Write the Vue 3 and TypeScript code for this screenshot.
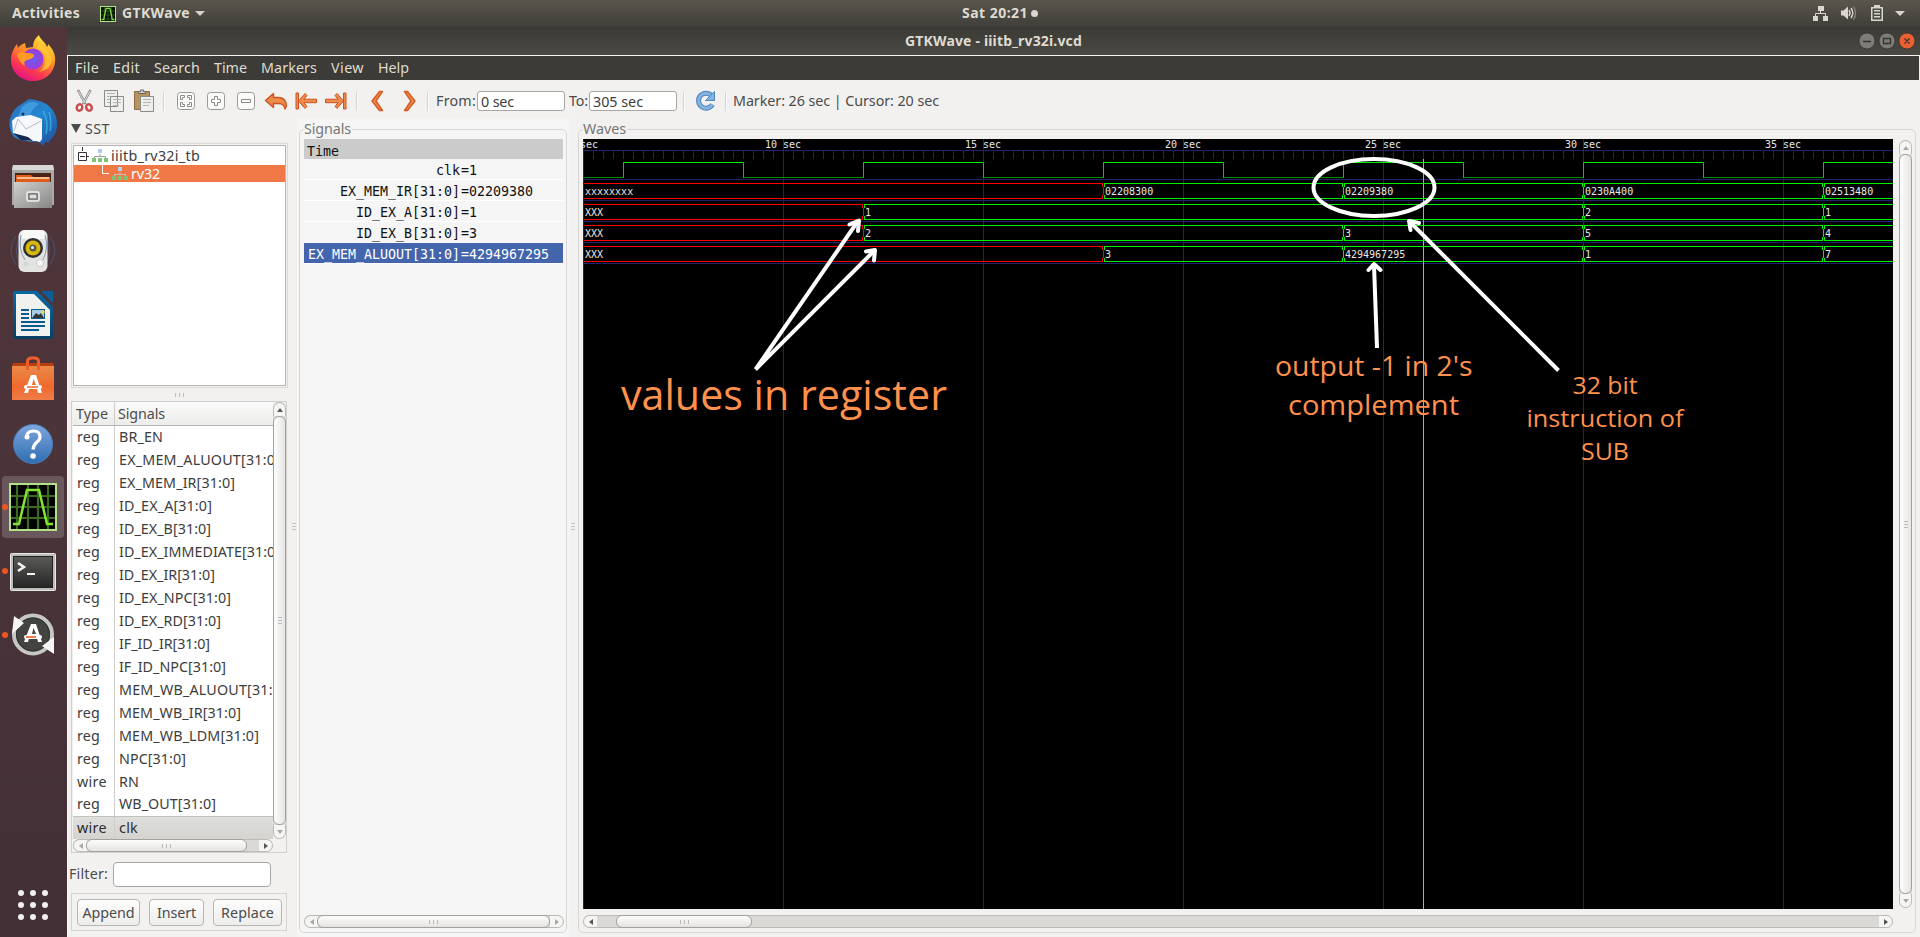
<script setup lang="ts">
type Fitted = { text: string; width: number }
type Bus = { top: number; known: number; segments: { at: number; value: string }[] }

/* Spreads a label's letters so that it takes the given number of pixels. */
const vFit = {
  mounted(el: HTMLElement, binding: { value: number }) {
    const count = (el.textContent ?? '').trim().length
    const gap = (binding.value - el.getBoundingClientRect().width) / count
    el.style.letterSpacing = `${gap.toFixed(3)}px`
  },
}

const menus: Fitted[] = [
  { text: 'File', width: 24 }, { text: 'Edit', width: 27 }, { text: 'Search', width: 46 },
  { text: 'Time', width: 33 }, { text: 'Markers', width: 56 }, { text: 'View', width: 33 },
  { text: 'Help', width: 31 },
]

const rows: { type: string; name: string; width: number }[] = [
  { type: 'reg', name: 'BR_EN', width: 44 },
  { type: 'reg', name: 'EX_MEM_ALUOUT[31:0]', width: 161 },
  { type: 'reg', name: 'EX_MEM_IR[31:0]', width: 116 },
  { type: 'reg', name: 'ID_EX_A[31:0]', width: 93 },
  { type: 'reg', name: 'ID_EX_B[31:0]', width: 92 },
  { type: 'reg', name: 'ID_EX_IMMEDIATE[31:0]', width: 161 },
  { type: 'reg', name: 'ID_EX_IR[31:0]', width: 96 },
  { type: 'reg', name: 'ID_EX_NPC[31:0]', width: 112 },
  { type: 'reg', name: 'ID_EX_RD[31:0]', width: 102 },
  { type: 'reg', name: 'IF_ID_IR[31:0]', width: 91 },
  { type: 'reg', name: 'IF_ID_NPC[31:0]', width: 107 },
  { type: 'reg', name: 'MEM_WB_ALUOUT[31:0]', width: 167 },
  { type: 'reg', name: 'MEM_WB_IR[31:0]', width: 122 },
  { type: 'reg', name: 'MEM_WB_LDM[31:0]', width: 140 },
  { type: 'reg', name: 'NPC[31:0]', width: 67 },
  { type: 'wire', name: 'RN', width: 20 },
  { type: 'reg', name: 'WB_OUT[31:0]', width: 97 },
  { type: 'wire', name: 'clk', width: 19 },
]

const signals = [
  { name: 'clk', value: '=1' },
  { name: 'EX_MEM_IR[31:0]', value: '=02209380' },
  { name: 'ID_EX_A[31:0]', value: '=1' },
  { name: 'ID_EX_B[31:0]', value: '=3' },
  { name: 'EX_MEM_ALUOUT[31:0]', value: '=4294967295' },
]

/* The wave canvas is 1310 wide: 40 px a second, from 5 sec on. */
const WIDTH = 1310
const px = (sec: number) => (sec - 5) * 40
const marks = [5, 10, 15, 20, 25, 30, 35]
const ticks = Array.from({ length: 131 }, (_, i) => i * 10)
const clockEdges = [6, 9, 12, 15, 18, 21, 24, 27, 30, 33, 36]
const clockSpans = [5, ...clockEdges].map((t, i, all) => ({
  from: px(t),
  to: i + 1 < all.length ? px(all[i + 1]) : WIDTH,
  high: i % 2 === 1,
}))
const separators = [40, 61, 82, 103, 124]
const buses: Bus[] = [
  { top: 44, known: 18, segments: [{ at: 5, value: 'xxxxxxxx' }, { at: 18, value: '02208300' }, { at: 24, value: '02209380' }, { at: 30, value: '0230A400' }, { at: 36, value: '02513480' }] },
  { top: 65, known: 12, segments: [{ at: 5, value: 'XXX' }, { at: 12, value: '1' }, { at: 30, value: '2' }, { at: 36, value: '1' }] },
  { top: 86, known: 12, segments: [{ at: 5, value: 'XXX' }, { at: 12, value: '2' }, { at: 24, value: '3' }, { at: 30, value: '5' }, { at: 36, value: '4' }] },
  { top: 107, known: 18, segments: [{ at: 5, value: 'XXX' }, { at: 18, value: '3' }, { at: 24, value: '4294967295' }, { at: 30, value: '1' }, { at: 36, value: '7' }] },
]
function busPath(bus: Bus, i: number): string {
  const a = px(bus.segments[i].at)
  const next = bus.segments[i + 1]
  const b = next ? px(next.at) : WIDTH
  const t = bus.top
  let d = `M${a + 1} ${t + 0.5}H${b}M${a + 1} ${t + 15.5}H${b}`
  if (i > 0) d += `M${a + 1.5} ${t}v4M${a + 1.5} ${t + 12}v4`
  if (next) d += `M${b - 0.5} ${t}v4M${b + 0.5} ${t + 4}v8M${b - 0.5} ${t + 12}v4`
  return d
}
</script>

<template>
  <div class="screen">
    <header class="topbar">
      <span class="activities"><b v-fit="68">Activities</b></span>
      <svg class="app-icon" viewBox="0 0 48 48"><rect width="48" height="48" fill="#b4e08a" /><rect x="3" y="3" width="42" height="42" fill="#061006" /><path d="M3 15H45M3 27H45M3 39H45M13 3V45M24 3V45M35 3V45" stroke="#3c6a20" stroke-width="2" /><path d="M5 41h6L18 7h12l7 34h6" fill="none" stroke="#7ddb3a" stroke-width="4" /></svg>
      <span class="app-name"><b v-fit="68">GTKWave</b></span>
      <svg class="caret" width="10" height="5"><path d="M0 0h10L5 5z" fill="#d4d2cb" /></svg>
      <span class="clock"><b v-fit="66">Sat 20:21</b><i></i></span>
      <svg class="tray" width="96" height="20" viewBox="1811 4 96 20">
        <g fill="#d8d6cf"><path d="M1818 6h6v5h-6zM1813 16h5v5h-5zM1823 16h5v5h-5z" /><path d="M1820.500 11v3M1815.500 16v-2.500h10V16" fill="none" stroke="#d8d6cf" />
          <path d="M1841 10.500h2.500l4.500-4v13l-4.500-4h-2.500z" /><path d="M1849 10q2 3 0 6M1851 8q3.500 5 0 10" fill="none" stroke="#d8d6cf" stroke-width="1.400" /><path d="M1853.500 6.500q4 6.500 0 13" fill="none" stroke="#85837c" stroke-width="1.400" />
          <path d="M1874 5h6v2h3v14h-12V7h3z" /><path d="M1872.500 8.500h9v11h-9z" fill="#4b4943" /><path d="M1874 10h6v1.500h-6zM1874 13h6v1.500h-6zM1874 16h6v1.500h-6z" /><path d="M1895 11h10l-5 5z" />
        </g>
      </svg>
    </header>

    <div class="desktop">
      <nav class="dock">
        <div class="launcher"><svg viewBox="0 0 48 48">
          <defs><linearGradient id="fox" x1=".8" y1="0" x2=".3" y2="1"><stop offset="0" stop-color="#fff04a" /><stop offset=".4" stop-color="#ff9a22" /><stop offset=".75" stop-color="#fb3750" /><stop offset="1" stop-color="#e0128a" /></linearGradient><radialGradient id="globe"><stop offset="0" stop-color="#6a5cf0" /><stop offset="1" stop-color="#a03cd8" /></radialGradient></defs>
          <path d="M30 0c1 4 5 6 7 10l1 2c1-1 1-2 1-3 5 5 8 11 7 18-1 12-11 19-22 19S2 38 2 25c0-7 3-12 6-16l1 4c2-3 5-4 7-5l1 5 7-1c0-5 2-9 6-12z" fill="url(#fox)" />
          <circle cx="24" cy="24" r="10.500" fill="url(#globe)" /><path d="M8 19q4-3 9-1c4 0 8 0 8 3-1 3-5 3-7 4-3 1-3 3-2 6-5-3-7-8-8-12z" fill="#ff9a25" /><path d="M27 14q9 1 9 11 0 8-6 12 12-2 13-13Q39 12 30 9z" fill="#ffc936" opacity=".75" />
        </svg></div>
        <div class="launcher"><svg viewBox="0 0 48 48">
          <defs><linearGradient id="bird" x2="1" y2="1"><stop offset="0" stop-color="#2b6fc0" /><stop offset=".5" stop-color="#2387cf" /><stop offset="1" stop-color="#214a9a" /></linearGradient></defs>
          <path d="M20 0Q34 1 41 8q8 8 7 20-1 9-8 14l1 2-5-1-2 4-4-4Q12 43 5 38-1 30 1 20 4 9 14 4z" fill="url(#bird)" /><path d="M13 8Q21 0 30 5q-8 5-10 14l-11-1z" fill="#3f9bdd" /><path d="M3 22 7 18l15-2 11 4v20l-2 3-4-1-8 0L4 34z" fill="#f6f7fa" /><path d="m9 20 8 10 15-8M9 20l-4 12" fill="none" stroke="#b6bcc9" /><path d="m4 34 15 4 5 4-12-1z" fill="#172850" /><circle cx="14" cy="15" r="1.500" fill="#123058" />
          <path d="M34 12q6 10 3 23M40 13q3 9 1 19" stroke="#36a6dd" stroke-width="1.500" fill="none" />
        </svg></div>
        <div class="launcher"><svg viewBox="0 0 48 48">
          <defs><linearGradient id="metal" x2="1" y2="1"><stop offset="0" stop-color="#cfcfcd" /><stop offset="1" stop-color="#878785" /></linearGradient></defs>
          <path d="M4 2h40l1 4v36H3V6z" fill="#a9a9a7" /><path d="M4 2h40l1 5H3z" fill="#d8d8d6" /><path d="M6 10h36v10H6z" fill="#4a2416" /><path d="M7 12h15l2 2h17v5H7z" fill="#e05c1c" /><path d="M8 15h32" stroke="#ffe0b0" stroke-width="1.500" /><path d="M5 19h38v26H5z" fill="url(#metal)" /><rect x="18" y="29" width="12" height="9" rx="1.500" fill="#aaa" stroke="#efefef" stroke-width="1.500" /><rect x="20" y="31" width="8" height="5" fill="#ddd" stroke="#555" />
        </svg></div>
        <div class="launcher"><svg viewBox="0 0 48 48">
          <path d="M7 9q-10 13 0 29M11 10Q4 23 11 37M41 9q10 13 0 29M37 10q7 13 0 27" fill="none" stroke="#4a5f86" opacity=".7" />
          <rect x="9.500" y="3" width="29" height="42" rx="6" fill="#e3e3e1" /><rect x="12" y="3" width="24" height="9" rx="4" fill="#f8f8f7" /><path d="M12 8Q9 22 16 33M36 8q4 12-2 25" stroke="#8a9cba" fill="none" /><circle cx="24" cy="21" r="10" fill="#2f3133" /><circle cx="24" cy="21" r="7.500" fill="#d8b80a" /><circle cx="24" cy="21" r="3.500" fill="#5a5c4c" /><circle cx="23.500" cy="20.500" r="1.500" fill="#eee" /><circle cx="31" cy="36" r="3.500" fill="#fafafa" stroke="#c8c8c4" /><circle cx="17" cy="37" r="2.500" fill="#d6d6d3" />
        </svg></div>
        <div class="launcher"><svg viewBox="0 0 48 48">
          <defs><linearGradient id="writer" x2="0" y2="1"><stop offset="0" stop-color="#0a69a3" /><stop offset="1" stop-color="#083f63" /></linearGradient></defs>
          <path d="M6 0h22l16 16v30q0 2-2 2H6q-2 0-2-2V2q0-2 2-2z" fill="url(#writer)" /><path d="M32 0h12v12z" fill="#0a5f96" /><path d="M7 3h18l16 16v26H7z" fill="#f1f1f0" /><path d="M12 19h8M12 23h8M12 27h8M12 31h24M12 35h24M12 39h18" stroke="#0b5c8e" stroke-width="2" /><path d="M22 18h14v10H22z" fill="#0b5c8e" /><path d="M23 19h12v8H23z" fill="#a8cfea" /><path d="m23 27 4-5 3 2 2-2 3 5z" fill="#33383a" /><circle cx="34" cy="21" r="1.800" fill="#e8d84a" />
        </svg></div>
        <div class="launcher"><svg viewBox="0 0 48 48">
          <defs><linearGradient id="bag" x2="0" y2="1"><stop offset="0" stop-color="#e98a4a" /><stop offset=".6" stop-color="#ef6a2c" /><stop offset="1" stop-color="#f07d48" /></linearGradient></defs>
          <path d="M4 8h40l1 4H3z" fill="#b93d0d" /><path d="M3 11h42v34H3z" fill="url(#bag)" /><path d="M18.500 15V7q0-4 4-4h3q4 0 4 4v8" fill="none" stroke="#f05e2b" stroke-width="3" /><path d="M22 20h5l6 18h-4l-1-4h-8l-1 4h-4zM24.500 24 23 30h4z" fill="#fff" fill-rule="evenodd" /><rect x="15" y="30" width="18" height="4" rx="2" fill="#fff" /><path d="M18 32h11" stroke="#ee6a2e" stroke-width="1.500" />
        </svg></div>
        <div class="launcher low"><svg viewBox="0 0 48 48">
          <defs><linearGradient id="help" x2="0" y2="1"><stop offset="0" stop-color="#7fa6de" /><stop offset="1" stop-color="#2e6eb0" /></linearGradient></defs>
          <circle cx="24" cy="24" r="19.500" fill="url(#help)" stroke="#4b7dbb" /><path d="M17.500 18q0-7 7-7 6.500 0 6.500 6 0 3-3.500 5.500-3 2.500-3.500 7" fill="none" stroke="#fff" stroke-width="3.200" /><circle cx="18" cy="17" r="2.500" fill="#fff" /><circle cx="24" cy="36" r="2.800" fill="#fff" />
        </svg></div>
        <div class="launcher active running"><svg viewBox="0 0 48 48">
          <rect width="48" height="48" fill="#b4e08a" /><rect x="2" y="2" width="44" height="44" fill="#000" /><path d="M2 13H46M2 24H46M2 35H46M8 2V46M19 2V46M29 2V46M39 2V46" stroke="#3c6a20" stroke-width="2.200" /><path d="M4 41h6L18 7h12l8 34h6" fill="none" stroke="#82e332" stroke-width="2.500" />
        </svg></div>
        <div class="launcher running low"><svg viewBox="0 0 48 48">
          <defs><linearGradient id="term" x2="0" y2="1"><stop offset="0" stop-color="#5a5a58" /><stop offset="1" stop-color="#262626" /></linearGradient></defs>
          <rect x="1.500" y="5.500" width="45" height="37" rx="1" fill="#bdbdbb" stroke="#e8e8e6" /><rect x="4.500" y="8.500" width="39" height="31" fill="url(#term)" stroke="#222" /><path d="m9 15 6 4-6 4" fill="none" stroke="#f4f4f4" stroke-width="2.500" /><path d="M18 26h8" stroke="#f4f4f4" stroke-width="2" />
        </svg></div>
        <div class="launcher running"><svg viewBox="0 0 48 48">
          <circle cx="24" cy="23.500" r="19" fill="#434340" stroke="#c6c6c4" stroke-width="4" /><circle cx="24" cy="23.500" r="16.500" fill="none" stroke="#2e2e2c" /><path d="M5 5 15 12 3 23zM45 43 33 35l12-9z" fill="#f5f5f5" /><path d="M22 13h5l6 18h-4l-1-4h-8l-1 4h-4zM24.500 17 23 23h4z" fill="#fff" fill-rule="evenodd" /><rect x="15" y="24" width="18" height="4" rx="2" fill="#fff" /><path d="M17 26h10" stroke="#ee5a20" stroke-width="1.600" />
        </svg></div>
        <div class="apps-grid"><i v-for="n in 9" :key="n"></i></div>
      </nav>

      <main class="window">
        <div class="titlebar">
          <b v-fit="177">GTKWave - iiitb_rv32i.vcd</b>
          <svg class="controls" width="60" height="20" viewBox="0 0 60 20">
            <circle cx="10" cy="10" r="8" fill="#7d7c77" stroke="#33322e" stroke-width=".8" /><circle cx="30" cy="10" r="8" fill="#7d7c77" stroke="#33322e" stroke-width=".8" /><circle cx="50" cy="10" r="8" fill="#ec5f33" stroke="#33322e" stroke-width=".8" /><path d="M6 10.500h8M26.500 7.500h7v5h-7zM47.500 7.500l5 5M52.500 7.500l-5 5" fill="none" stroke="#35342f" stroke-width="1.300" />
          </svg>
        </div>
        <div class="menubar"><span v-for="m in menus" :key="m.text" v-fit="m.width">{{ m.text }}</span></div>

        <div class="toolbar">
          <div class="tool"><svg viewBox="0 0 24 24"><path d="m6 1 7.500 14M18.500 1 11 15" stroke="#8d8f8c" stroke-width="2.600" /><path d="m6.500 2 6.500 12M18 2l-6.500 12" stroke="#dedfdc" stroke-width="1" /><ellipse cx="7.500" cy="18.500" rx="2.700" ry="3.300" fill="none" stroke="#c9484a" stroke-width="2.400" transform="rotate(25 7.500 18.500)" /><ellipse cx="17" cy="18.500" rx="2.700" ry="3.300" fill="none" stroke="#c9484a" stroke-width="2.400" transform="rotate(-25 17 18.500)" /></svg></div>
          <div class="tool"><svg viewBox="0 0 24 24"><path d="M2.500 1.500h13v16h-13zM8.500 7.500h13v15h-13z" fill="#eeeeec" stroke="#8a8c87" /><path d="M5 4.500h8M5 7.500h3M5 10.500h3M5 13.500h3M11 10.500h8M11 13.500h8M11 16.500h6" stroke="#b4b6b1" /></svg></div>
          <div class="tool"><svg viewBox="0 0 24 24"><path d="M2.500 2.500h15v18h-15z" fill="#b7935e" stroke="#8c6c42" /><path d="M6.500 4.500v-2h2v-1.500h3v1.500h2v2z" fill="#ccc" stroke="#666" /><path d="M8.500 7.500h13v15h-13z" fill="#eeeeec" stroke="#8a8c87" /><path d="M11 10.500h8M11 13.500h8M11 16.500h6" stroke="#b4b6b1" /></svg></div>
          <div class="divider first"></div>
          <div class="tool"><svg viewBox="0 0 24 24"><rect x="3.500" y="3.500" width="17" height="17" rx="3" fill="#fbfbfa" stroke="#979994" /><path d="M6.500 10.500v-4h4v2h-2v2zM17.500 10.500v-4h-4v2h2v2zM6.500 13.500v4h4v-2h-2v-2zM17.500 13.500v4h-4v-2h2v-2z" fill="#fff" stroke="#888a85" /></svg></div>
          <div class="tool"><svg viewBox="0 0 24 24"><rect x="3.500" y="3.500" width="17" height="17" rx="3" fill="#fbfbfa" stroke="#979994" /><path d="M10.500 7.500h3v3h3v3h-3v3h-3v-3h-3v-3h3z" fill="#fff" stroke="#888a85" /></svg></div>
          <div class="tool"><svg viewBox="0 0 24 24"><rect x="3.500" y="3.500" width="17" height="17" rx="3" fill="#fbfbfa" stroke="#979994" /><path d="M7.500 10.500h9v3h-9z" fill="#fff" stroke="#888a85" /></svg></div>
          <div class="tool"><svg viewBox="0 0 24 24"><path d="M1.500 11.500 9.500 4.500v4H14q8 0 8.500 8.500l-1.500 3q-1-6-7-5.500H9.500v4z" fill="#ec8b4c" stroke="#cf5320" stroke-width="1.400" stroke-linejoin="round" /></svg></div>
          <div class="tool"><svg viewBox="0 0 24 24"><path d="M2 4h2.500v16H2zM4.500 12l6.500-7.500 2 2-3 3.700h12.500v3.500H10l3 3.700-2 2z" fill="#ec8b4c" stroke="#cf5320" stroke-linejoin="round" /></svg></div>
          <div class="tool"><svg viewBox="0 0 24 24"><path d="M22 4h-2.500v16H22zM19.500 12 13 4.500l-2 2 3 3.700H1.500v3.500H14l-3 3.700 2 2z" fill="#ec8b4c" stroke="#cf5320" stroke-linejoin="round" /></svg></div>
          <div class="divider second"></div>
          <div class="tool wide"><svg viewBox="0 0 24 24"><path d="M13.500 2.500h3L10 12l6.500 9.500h-3L6 12z" fill="#ec8b4c" stroke="#d65a22" stroke-width="1.400" stroke-linejoin="round" /></svg></div>
          <div class="tool wide"><svg viewBox="0 0 24 24"><path d="M10.500 2.500h-3L14 12l-6.500 9.500h3L18 12z" fill="#ec8b4c" stroke="#d65a22" stroke-width="1.400" stroke-linejoin="round" /></svg></div>
          <div class="divider third"></div>
          <div class="caption from"><span v-fit="40">From:</span></div>
          <div class="entry"><span v-fit="33">0 sec</span></div>
          <div class="caption to"><span v-fit="19">To:</span></div>
          <div class="entry"><span v-fit="50">305 sec</span></div>
          <div class="divider fourth"></div>
          <div class="tool"><svg viewBox="0 0 24 24"><path d="M18.500 6.500A7.500 7.500 0 1 0 19.500 15.500" fill="none" stroke="#4f87c0" stroke-width="5" /><path d="M18.500 6.500A7.500 7.500 0 1 0 19.500 15.500" fill="none" stroke="#85b1dd" stroke-width="3" /><path d="M21.500 2.500v9H12.500z" fill="#85b1dd" stroke="#4f87c0" /></svg></div>
          <div class="divider fifth"></div>
          <div class="caption"><span v-fit="206">Marker: 26 sec | Cursor: 20 sec</span></div>
        </div>

        <div class="panes">
          <section class="sst">
            <div class="sst-head"><svg width="10" height="9"><path d="M0 0h10L5 9z" fill="#4c4c4c" /></svg><span v-fit="25">SST</span></div>
            <div class="tree">
              <div class="tree-inner">
                <div class="node root">
                  <svg class="expander" width="12" height="15"><path d="M5.500 0v4M10 9.500h2M1.500 5.500h8v8h-8zM3 9.500h5" fill="none" stroke="#333" /></svg>
                  <svg class="module" width="16" height="14"><path d="M8 5v2M2.500 9V7.500h11V9" fill="none" stroke="#9aa09a" /><path d="M6 0h4v4H6z" fill="#a8ccf0" /><path d="M0 9h4v4H0zM6 9h4v4H6zM12 9h4v4h-4z" fill="#7fc474" /></svg>
                  <span v-fit="89">iiitb_rv32i_tb</span>
                </div>
                <div class="node selected">
                  <svg class="branch" width="7" height="9"><path d="M.5 0v8.500H7" fill="none" stroke="#fff" /></svg>
                  <svg class="module" width="16" height="14"><path d="M8 5v2M2.500 9V7.500h11V9" fill="none" stroke="#c8c0b8" /><path d="M6 0h4v4H6z" fill="#b4d4f4" /><path d="M0 9h4v4H0zM6 9h4v4H6zM12 9h4v4h-4z" fill="#7fc474" /></svg>
                  <span v-fit="29">rv32</span>
                </div>
              </div>
            </div>
            <div class="grip-h"><i></i><i></i><i></i></div>
            <div class="list">
              <div class="list-top">
                <div class="table">
                  <div class="thead"><div class="cell type"><span v-fit="32">Type</span></div><div class="cell name"><span v-fit="47">Signals</span></div></div>
                  <div v-for="(r, i) in rows" :key="r.name" class="trow" :class="{ current: i === rows.length - 1 }">
                    <div class="cell type"><span v-fit="r.type === 'reg' ? 23 : 30">{{ r.type }}</span></div>
                    <div class="cell name"><span v-fit="r.width">{{ r.name }}</span></div>
                  </div>
                </div>
                <div class="vbar"><div class="knob top"><i class="arrow up"></i></div><div class="vthumb"><i></i><i></i><i></i></div><div class="knob bottom"><i class="arrow down pale"></i></div></div>
              </div>
              <div class="hbar list-hbar"><div class="knob left"><i class="arrow west pale"></i></div><div class="trough"><div class="hthumb list-thumb"><i></i><i></i><i></i></div></div><div class="knob right"><i class="arrow east"></i></div></div>
            </div>
            <div class="filter"><span v-fit="39">Filter:</span><div class="filter-entry"></div></div>
            <div class="buttons">
              <button class="append"><span v-fit="52">Append</span></button>
              <button class="insert"><span v-fit="39">Insert</span></button>
              <button class="replace"><span v-fit="53">Replace</span></button>
            </div>
            <div class="grip-v"><i></i><i></i><i></i></div>
          </section>

          <section class="signals">
            <div class="frame">
              <span class="legend"><span v-fit="47">Signals</span></span>
              <div class="time-row">Time</div>
              <div v-for="(s, i) in signals" :key="s.name" class="signal" :class="{ chosen: i === 4 }"><span class="signal-name">{{ s.name }}</span><span>{{ s.value }}</span></div>
              <div class="hbar bottom-bar"><div class="knob left"><i class="arrow west pale"></i></div><div class="trough"><div class="hthumb full"><i></i><i></i><i></i></div></div><div class="knob right"><i class="arrow east pale"></i></div></div>
            </div>
          </section>

          <section class="waves">
            <div class="grip-v side"><i></i><i></i><i></i></div>
            <div class="frame">
              <span class="legend"><span v-fit="43">Waves</span></span>
              <div class="wave-row">
                <svg class="canvas" width="1310" height="770" viewBox="0 0 1310 770">
                  <rect width="1310" height="770" fill="#000" />
                  <g class="crisp" stroke="#20206c">
                    <path d="M0 11.500H1310" />
                    <path v-for="t in ticks" :key="t" :d="`M${t + 0.5} 12v8`" />
                    <path v-for="m in marks" :key="m" :d="`M${px(m) + 0.5} 0V770`" />
                    <path v-for="y in separators" :key="y" :d="`M0 ${y + 0.5}H1310`" />
                  </g>
                  <g class="mono">
                    <text v-for="m in marks" :key="m" :x="px(m) - (m > 9 ? 18 : 15)" y="9">{{ m }} sec</text>
                  </g>
                  <g class="crisp" fill="none">
                    <path v-for="s in clockSpans" :key="s.from" :d="`M${s.from} ${s.high ? 23.5 : 38.5}H${s.to + 1}`" :stroke="s.high ? '#00f200' : '#008c00'" />
                    <path v-for="t in clockEdges" :key="t" :d="`M${px(t) + 0.5} 23v16`" stroke="#00cc00" />
                    <g v-for="b in buses" :key="b.top">
                      <path v-for="(s, i) in b.segments" :key="i" :d="busPath(b, i)" :stroke="s.at < b.known ? '#ff0000' : '#00f000'" />
                    </g>
                  </g>
                  <g v-for="b in buses" :key="b.top" class="mono">
                    <text v-for="(s, i) in b.segments" :key="i" :x="px(s.at) + 2" :y="b.top + 12">{{ s.value }}</text>
                  </g>
                  <path class="crisp" d="M840.500 20V770" stroke="#ff8686" />
                  <g class="note">
                    <text x="38" y="270.500" font-size="41.500" textLength="326" lengthAdjust="spacingAndGlyphs">values in register</text>
                    <text x="692" y="237" font-size="28" textLength="197.500" lengthAdjust="spacingAndGlyphs">output -1 in 2's</text>
                    <text x="705" y="276" font-size="28" textLength="171" lengthAdjust="spacingAndGlyphs">complement</text>
                    <text x="989.500" y="254.500" font-size="24" textLength="65" lengthAdjust="spacingAndGlyphs">32 bit</text>
                    <text x="943.500" y="288" font-size="24" textLength="157" lengthAdjust="spacingAndGlyphs">instruction of</text>
                    <text x="998" y="321" font-size="24" textLength="48" lengthAdjust="spacingAndGlyphs">SUB</text>
                  </g>
                  <g fill="none" stroke="#fff" stroke-width="4">
                    <ellipse cx="791" cy="48.500" rx="60.500" ry="28.500" />
                    <path d="M172.500 230.500 275 82M172.500 230.500 291 112M794 209 791 126M975.500 231.500 827 83" />
                    <path d="m266.500 85.500 9.500-4-1 10.500M283 112.500l9-1.500-1 10.500M785.500 131l5.500-6 6.500 6M827.500 91l-1.500-9 10 2" stroke-linecap="round" stroke-linejoin="round" />
                  </g>
                </svg>
                <div class="vbar waves-vbar"><div class="knob top"><i class="arrow up pale"></i></div><div class="vthumb"><i></i><i></i><i></i></div><div class="knob bottom"><i class="arrow down pale"></i></div></div>
              </div>
              <div class="hbar bottom-bar"><div class="knob left"><i class="arrow west"></i></div><div class="trough"><div class="hthumb wave-thumb"><i></i><i></i><i></i></div></div><div class="knob right"><i class="arrow east"></i></div></div>
            </div>
          </section>
        </div>
      </main>
    </div>
  </div>
</template>

<style>
body { margin: 0; overflow: hidden; }
</style>

<style scoped>
* { box-sizing: border-box; }
.screen { width: 1920px; height: 937px; display: flex; flex-direction: column; overflow: hidden; font: 14.3px/17px "Noto Sans", "Open Sans", sans-serif; color: #4c4c4c; white-space: nowrap; }
svg { display: block; flex: none; }
.screen span, .screen b { display: inline-block; flex: none; }
.topbar { position: relative; height: 27px; flex: none; display: flex; align-items: center; padding-left: 12px; background: linear-gradient(#5a564d, #3f3e39); color: #dfdbd2; font-size: 14px; }
.topbar > span { padding-bottom: 2px; }
.activities { width: 88px; }
.app-icon { width: 16px; height: 16px; }
.app-name { width: 68px; margin: 0 5px 0 6px; }
.clock { position: absolute; left: 962px; top: 4px; }
.clock i { position: absolute; left: 69px; top: 6px; width: 7px; height: 7px; border-radius: 50%; background: #d8d6cf; }
.tray { position: absolute; left: 1811px; top: 4px; }
.desktop { flex: 1; display: flex; }
.dock { width: 67px; height: 910px; display: flex; flex-direction: column; background: linear-gradient(#513539, #4a343a 50%, #423036); }
.launcher { position: relative; height: 64px; flex: none; display: flex; align-items: center; justify-content: center; padding-right: 1px; }
.launcher.low { padding-top: 2px; }
.launcher svg { position: relative; width: 48px; height: 48px; }
.launcher.active::before { content: ""; position: absolute; left: 2px; top: 1px; width: 62px; height: 62px; border-radius: 4px; background: #6a575c; }
.launcher.running::after { content: ""; position: absolute; left: 2px; top: 29px; width: 6px; height: 6px; border-radius: 50%; background: #ef5522; }
.apps-grid { margin: auto 0 17px 18px; display: grid; grid-template-columns: repeat(3, 6px); gap: 6px; }
.apps-grid i { width: 6px; height: 6px; border-radius: 50%; background: #f2f0f0; }
.window { width: 1853px; display: flex; flex-direction: column; background: #f2f1f0; }
.titlebar { position: relative; height: 28px; padding-bottom: 2px; display: flex; align-items: center; justify-content: center; background: linear-gradient(#3a3934, #4b4a44); color: #dfdbd2; font-size: 14px; }
.controls { position: absolute; right: 3px; top: 4px; }
.menubar { height: 25px; margin: 0 1px; padding: 0 0 2px 7px; display: flex; align-items: center; gap: 14px; background: #3c3b37; border-top: 1px solid #f6f5f2; color: #dfdbd2; }
.toolbar { height: 38px; padding: 4px 0 0 2px; display: flex; align-items: center; }
.tool { width: 30px; display: flex; justify-content: center; }
.tool.wide { width: 31.500px; }
.tool svg { width: 24px; height: 24px; }
.caption { padding-bottom: 2px; }
.divider { height: 19px; border-left: 1px solid #d6d4d1; border-right: 1px solid #fafafa; width: 2px; }
.first { margin: 0 6px 0 4px; }
.second { margin: 0 4px 0 5px; }
.third { margin: 0 7px 0 2px; }
.fourth { margin: 0 5px 0 6px; }
.fifth { margin: 0 6px 0 5px; }
.from { width: 41px; }
.to { width: 20px; margin-left: 4px; }
.entry { width: 88px; height: 20px; padding: 0 0 0 3px; border: 1px solid #a9a7a3; border-radius: 3px; background: #fff; display: flex; align-items: center; color: #3c3c3c; }
.panes { height: 819px; display: flex; }
.sst { position: relative; width: 230px; display: flex; flex-direction: column; border-left: 1px solid #faf9f8; padding-left: 3px; }
.sst-head { height: 25px; padding-bottom: 5px; display: flex; align-items: center; gap: 4px; }
.tree { width: 217px; height: 245px; border: 1px solid #dcdad8; padding: 1px; }
.tree-inner { height: 241px; border: 1px solid #b6b4b1; background: #fff; }
.node { height: 18px; display: flex; align-items: center; color: #3c3c3c; }
.root { height: 19px; padding: 0 0 0 3px; }
.expander { margin: -2px 3px 0 0; }
.root span { margin: -1px 0 0 3px; }
.selected { height: 17px; padding-left: 28px; background: #f07746; color: #fff; }
.branch { margin: -8px 3px 0 0; }
.selected span { margin: -1px 0 0 3px; }
.grip-h { height: 13px; display: flex; align-items: center; justify-content: center; gap: 3px; padding-right: 10px; }
.grip-h i { width: 1px; height: 4px; background: #bfbdba; }
.grip-v { position: absolute; left: 224px; top: 405px; display: flex; flex-direction: column; gap: 2px; }
.grip-v i { width: 4px; height: 1px; background: #c4c2bf; }
.grip-v.side { left: 1px; }
.list { width: 216px; height: 452px; border: 1px solid #d2d0ce; display: flex; flex-direction: column; }
.list-top { display: flex; height: 437px; padding-left: 1px; }
.table { width: 201px; overflow: hidden; background: #fff; }
.thead { height: 24px; display: flex; background: linear-gradient(#fafafa, #ececea); border-bottom: 1px solid #b5b3b0; }
.trow { height: 22.970px; display: flex; color: #3c3c3c; }
.trow .cell { padding-bottom: 2px; }
.current { background: linear-gradient(#dededc, #d4d3d0); border-top: 1px solid #c4c2bf; color: #2e2e2e; }
.cell { display: flex; align-items: center; overflow: hidden; }
.type { width: 42px; padding-left: 4px; border-right: 1px solid #cfcdcb; }
.thead .type { padding-left: 3px; }
.thead .name { padding-left: 3px; }
.name { flex: 1; padding-left: 4px; }
.vbar { width: 13px; display: flex; flex-direction: column; background: #dddcd9; border-radius: 7px; flex: none; }
.hbar { height: 13px; display: flex; background: #dddcd9; border-radius: 7px; flex: none; }
.knob { display: flex; align-items: center; justify-content: center; border: 1px solid #bcbab7; background: #f5f5f4; flex: none; }
.knob.top, .knob.bottom { height: 14px; width: 13px; }
.knob.left, .knob.right { width: 14px; height: 13px; }
.knob.top { border-radius: 7px 7px 0 0; border-bottom: 0; }
.knob.bottom { border-radius: 0 0 7px 7px; border-top: 0; }
.knob.left { border-radius: 7px 0 0 7px; border-right: 0; }
.knob.right { border-radius: 0 7px 7px 0; border-left: 0; }
.arrow { width: 0; height: 0; border: 3px solid transparent; color: #555; }
.pale { color: #aaa8a5; }
.up { border-bottom: 4px solid; border-top: 0; }
.down { border-top: 4px solid; border-bottom: 0; }
.west { border-right: 4px solid; border-left: 0; }
.east { border-left: 4px solid; border-right: 0; }
.vthumb { flex: 1; display: flex; flex-direction: column; align-items: center; justify-content: center; gap: 2px; border: 1px solid #a3a19e; border-radius: 6px; background: linear-gradient(90deg, #fdfdfd, #e6e5e3); }
.vthumb i { width: 4px; height: 1px; background: #bbb; }
.trough { flex: 1; border: 1px solid #bebcb9; border-width: 1px 0; display: flex; background: #dad9d6; }
.hthumb { height: 13px; margin-top: -1px; display: flex; align-items: center; justify-content: center; gap: 3px; border: 1px solid #a3a19e; border-radius: 6px; background: linear-gradient(#fdfdfd, #e4e3e1); }
.hthumb i { width: 1px; height: 4px; background: #bbb; }
.list-hbar { width: 200px; margin-left: 1px; }
.list-thumb { width: 161px; margin-left: -1px; }
.full { width: 233px; margin-left: -1px; }
.wave-thumb { width: 136px; margin-left: 19px; }
.filter { height: 42px; display: flex; align-items: center; margin-left: -2px; }
.filter span { margin: -1px 5px 0 0; }
.filter-entry { width: 158px; height: 25px; border: 1px solid #a9a7a3; border-radius: 4px; background: #fff; }
.buttons { width: 216px; height: 38px; margin-top: -2px; padding: 0 4px 0 5px; border: 1px solid #d6d4d2; display: flex; align-items: center; justify-content: space-between; }
button { height: 27px; padding: 0; border: 1px solid #b8b6b3; border-radius: 4px; background: linear-gradient(#fdfdfd, #ededec); font: inherit; color: inherit; }
.append { width: 63px; }
.insert { width: 55px; }
.replace { width: 69px; }
.signals { width: 273px; padding: 11px 3px 4px 2px; background: #f5f5f5; }
.frame { position: relative; height: 804px; border: 1px solid #d8d6d4; border-radius: 5px; padding: 9px 2px 4px 4px; display: flex; flex-direction: column; }
.legend { position: absolute; left: 4px; top: -10px; padding-right: 1px; background: #f5f5f5; color: #757575; }
.time-row { height: 20px; padding: 4px 0 0 3px; background: #cbcbcb; font: 13.300px/17px "DejaVu Sans Mono", monospace; color: #111; }
.signal { height: 21px; padding: 2px 0 0 3px; display: flex; align-items: center; gap: 1px; border-bottom: 1px solid #fff; font: 13.300px/17px "DejaVu Sans Mono", monospace; color: #111; }
.time-row, .signal { width: 259px; }
.signal-name { width: 153px; text-align: right; }
.chosen { background: #4464ac; color: #fff; }
.bottom-bar { margin-top: auto; width: 259px; }
.waves { position: relative; flex: 1; padding: 11px 4px 4px 8px; }
.waves .legend { background: #f2f1f0; }
.wave-row { display: flex; height: 770px; }
.waves-vbar { height: 768px; margin: 1px 0 0 6px; }
.waves .bottom-bar { width: 1310px; }
.crisp { shape-rendering: crispEdges; }
.mono { font: 10px "DejaVu Sans Mono", monospace; fill: #e8e8e8; }
.note { font-family: "Open Sans", "Noto Sans", sans-serif; fill: #ff914d; }
</style>
